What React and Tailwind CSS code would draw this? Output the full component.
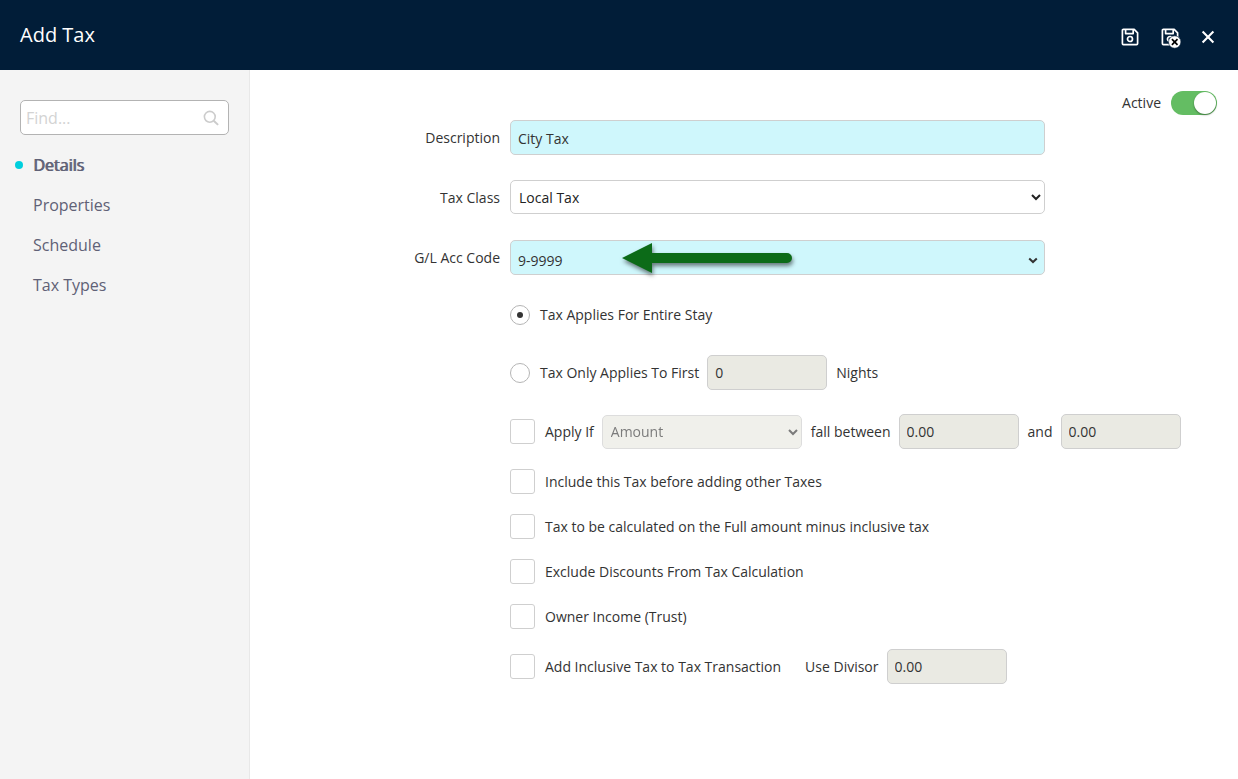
import React from "react";

const NAV = ["Details", "Properties", "Schedule", "Tax Types"];

const FIELD = "h-[35px] rounded-[5px] border border-[#cfcfcf] px-[7px] text-sm";
const DISABLED = FIELD + " w-[120px] shrink-0 bg-[#eaeae3] text-[#333333]";
const LABEL = "w-[260px] shrink-0 pr-[10px] text-right";

function SaveShape() {
  return (
    <g fill="none" stroke="#fff" strokeWidth="1.7" strokeLinejoin="round">
      <path d="M2.4 1.4h10.8l3.4 3.4v10.8a1 1 0 0 1-1 1H2.4a1 1 0 0 1-1-1V2.4a1 1 0 0 1 1-1z" />
      <path d="M4.6 1.6v4h7.6v-4" />
      <circle cx="9" cy="11" r="2.5" />
    </g>
  );
}

function SaveIcon() {
  return (
    <svg className="size-[18px]" viewBox="0 0 18 18" aria-hidden="true">
      <SaveShape />
    </svg>
  );
}

function SaveExitIcon() {
  return (
    <svg className="h-[18px] w-5 overflow-visible" viewBox="0 0 20 18" aria-hidden="true">
      <SaveShape />
      <circle cx="13.7" cy="14" r="6.2" fill="#fff" stroke="#011d38" strokeWidth="0.6" />
      <path d="M10.9 11.2l5.6 5.6M16.5 11.2l-5.6 5.6" stroke="#000" strokeWidth="1.7" />
    </svg>
  );
}

function CloseIcon() {
  return (
    <svg className="size-[14px]" viewBox="0 0 14 14" aria-hidden="true">
      <path d="M1.6 1.6l10.8 10.8M12.4 1.6L1.6 12.4" stroke="#fff" strokeWidth="2.1" />
    </svg>
  );
}

function Arrow() {
  return (
    <svg
      className="pointer-events-none absolute top-[2px] left-[111px] h-[40px] w-[180px] overflow-visible drop-shadow-[1px_3px_2px_rgba(0,0,0,0.5)]"
      viewBox="0 0 180 40"
      aria-hidden="true"
    >
      <path d="M1 16L31 1v10h135a5 5 0 0 1 0 10H31v10z" fill="#0c6b18" />
    </svg>
  );
}

function Check({ id, children }) {
  return (
    <div className="flex items-center">
      <input
        id={id}
        type="checkbox"
        className="size-[25px] shrink-0 appearance-none rounded-[3px] border border-[#cfcfcf] bg-white checked:bg-[#333333]"
      />
      <label htmlFor={id} className="pl-[10px]">{children}</label>
    </div>
  );
}

function Radio({ id, children, defaultChecked }) {
  return (
    <div className="flex items-center">
      <input
        id={id}
        type="radio"
        name="applies"
        defaultChecked={defaultChecked}
        className="grid size-5 shrink-0 appearance-none place-content-center rounded-full border border-[#b5b5b5] bg-white before:size-[6px] before:rounded-full checked:before:bg-[#333333]"
      />
      <label htmlFor={id} className="pl-[10px]">{children}</label>
    </div>
  );
}

export default function App() {
  return (
    <div className="flex min-h-screen flex-col bg-white font-['Open_Sans',sans-serif] text-sm text-[#333333]">
      <header className="flex h-[70px] items-center justify-between bg-[#011d38] pr-[23px] pl-5 text-white">
        <h1 className="text-xl">Add Tax</h1>
        <div className="flex items-center gap-5 pt-1">
          <button type="button" aria-label="Save" className="pr-[2px]"><SaveIcon /></button>
          <button type="button" aria-label="Save and exit"><SaveExitIcon /></button>
          <button type="button" aria-label="Close"><CloseIcon /></button>
        </div>
      </header>

      <div className="flex flex-1">
        <aside className="w-[250px] shrink-0 border-r border-[#e8e8e8] bg-[#f4f4f4] pt-[30px]">
          <div className="relative mr-5 ml-5">
            <input
              type="search"
              aria-label="Find"
              placeholder="Find..."
              className="h-[35px] w-full rounded-[5px] border border-[#b3b3b3] bg-white pr-9 pl-[5px] text-base placeholder:text-[#d3d3d3]"
            />
            <svg className="absolute top-[10px] right-[10px] size-4" viewBox="0 0 16 16" aria-hidden="true">
              <g fill="none" stroke="#cccccc" strokeWidth="1.6">
                <circle cx="6.8" cy="6.8" r="5.4" />
                <path d="M10.7 10.7l4.4 4.2" strokeWidth="2" />
              </g>
            </svg>
          </div>
          <nav className="mt-[10px] text-base text-[#606176]">
            <ul>
              {NAV.map((name, i) => (
                <li key={name}>
                  <a href="#" className="flex h-10 items-start pt-2 pl-[15px]">
                    <span className={i === 0 ? "mt-2 mr-[10px] size-2 rounded-full bg-[#00cfdd]" : "mr-[10px] size-2"} />
                    <span className={i === 0 ? "[text-shadow:1px_0_0_currentColor]" : ""}>{name}</span>
                  </a>
                </li>
              ))}
            </ul>
          </nav>
        </aside>

        <main className="min-w-0 flex-1 pt-[21px] pb-8">
          <div className="mb-[5px] flex h-6 items-center justify-end gap-[10px] pr-[21px]">
            <label htmlFor="active">Active</label>
            <input
              id="active"
              type="checkbox"
              role="switch"
              defaultChecked
              className="flex h-6 w-[46px] appearance-none items-center rounded-full bg-[#cccccc] px-px before:size-[22px] before:rounded-full before:bg-white before:shadow-[0_1px_2px_rgba(0,0,0,0.4)] checked:justify-end checked:bg-[#64bd63]"
            />
          </div>

          <form>
            <div className="flex flex-col gap-[25px]">
              <div className="flex items-center">
                <label htmlFor="description" className={LABEL}>Description</label>
                <input id="description" defaultValue="City Tax" className={FIELD + " min-w-0 max-w-[535px] flex-1 bg-[#cff7fc] pt-[2px]"} />
              </div>
              <div className="flex h-[35px] items-start">
                <label htmlFor="taxclass" className={LABEL + " pt-2"}>Tax Class</label>
                <select id="taxclass" className="h-[34px] min-w-0 max-w-[535px] flex-1 rounded-[5px] border border-[#cfcfcf] bg-white px-1 text-sm text-[#222222]">
                  <option>Local Tax</option>
                </select>
              </div>
              <div className="flex items-center">
                <label htmlFor="glcode" className={LABEL}>G/L Acc Code</label>
                <div className="relative min-w-0 max-w-[535px] flex-1">
                  <select id="glcode" className={FIELD + " block w-full appearance-none bg-[#cff7fc] pt-[6px]"}>
                    <option>9-9999</option>
                  </select>
                  <svg className="pointer-events-none absolute top-[17px] right-[7px] h-[7px] w-[10px]" viewBox="0 0 10 7" aria-hidden="true">
                    <path d="M1.2 1.4L5 5l3.8-3.6" fill="none" stroke="#333" strokeWidth="2" />
                  </svg>
                  <Arrow />
                </div>
              </div>
            </div>

            <div className="flex flex-col gap-[30px] pt-[30px] pl-[260px]">
              <Radio id="entire" defaultChecked>Tax Applies For Entire Stay</Radio>
              <div className="flex items-center gap-2">
                <Radio id="first">Tax Only Applies To First</Radio>
                <input id="nights" disabled defaultValue="0" className={DISABLED} />
                <label htmlFor="nights" className="pl-px">Nights</label>
              </div>
            </div>

            <div className="flex flex-col gap-5 pt-6 pl-[260px]">
              <div className="flex items-center gap-2">
                <Check id="applyif">Apply If</Check>
                <select disabled aria-label="Apply if" className="h-[34px] w-[200px] shrink-0 rounded-[5px] border border-[#cfcfcf] bg-[#eaeae3] px-1 text-sm text-[#444444] opacity-70">
                  <option>Amount</option>
                </select>
                <label htmlFor="from" className="pl-px">fall between</label>
                <input id="from" disabled defaultValue="0.00" className={DISABLED} />
                <label htmlFor="to" className="pl-px">and</label>
                <input id="to" disabled defaultValue="0.00" className={DISABLED} />
              </div>
              <Check id="include">Include this Tax before adding other Taxes</Check>
              <Check id="full">Tax to be calculated on the Full amount minus inclusive tax</Check>
              <Check id="exclude">Exclude Discounts From Tax Calculation</Check>
              <Check id="owner">Owner Income (Trust)</Check>
              <div className="flex items-center gap-2">
                <Check id="addinc">Add Inclusive Tax to Tax Transaction</Check>
                <label htmlFor="divisor" className="pl-4">Use Divisor</label>
                <input id="divisor" disabled defaultValue="0.00" className={DISABLED} />
              </div>
            </div>
          </form>
        </main>
      </div>
    </div>
  );
}
